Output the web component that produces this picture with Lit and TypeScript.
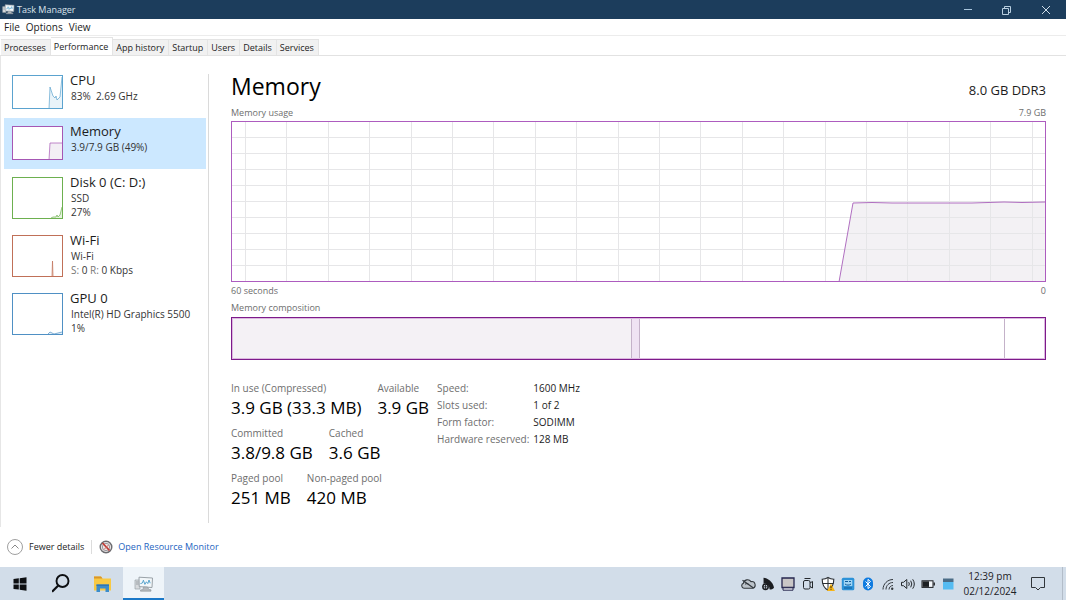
import { LitElement, html, css, svg } from "lit";
import { customElement, property, state } from "lit/decorators.js";
import { classMap } from "lit/directives/class-map.js";

interface Resource {
  id: string;
  name: string;
  lines: unknown[];
  color: string;
  fill: string;
  line: string;
  tall: boolean;
}

const resources: Resource[] = [
  {
    id: "cpu",
    name: "CPU",
    lines: ["83%  2.69 GHz"],
    color: "#5ba3cf",
    fill: "#e9f3f9",
    line: "M37 34 L38 12 L40 18 L41 21 L43 23 L44 21 L45 25 L47 23 L48 22 L50 2",
    tall: false,
  },
  {
    id: "memory",
    name: "Memory",
    lines: ["3.9/7.9 GB (49%)"],
    color: "#a657b4",
    fill: "#f3eff5",
    line: "M37 34 L38 17 L50 17",
    tall: false,
  },
  {
    id: "disk",
    name: "Disk 0 (C: D:)",
    lines: ["SSD", "27%"],
    color: "#6db04f",
    fill: "#e5f3df",
    line: "M39 41 L41 40 L44 40 L45 38 L46 40 L48 38 L49 34 L50 30",
    tall: true,
  },
  {
    id: "wifi",
    name: "Wi-Fi",
    lines: [
      "Wi-Fi",
      html`<span class="dim">S:</span> 0 <span class="dim">R:</span> 0 Kbps`,
    ],
    color: "#c07058",
    fill: "#f7dfd2",
    line: "M40 41 L40.500 26 L41 41",
    tall: true,
  },
  {
    id: "gpu",
    name: "GPU 0",
    lines: ["Intel(R) HD Graphics 5500", "1%"],
    color: "#4f90c4",
    fill: "#e4eff8",
    line: "M36 41 L38 39 L40 40 L42 41 L46 40 L50 39",
    tall: true,
  },
];

@customElement("usage-thumb")
class UsageThumb extends LitElement {
  @property({ attribute: false }) resource!: Resource;

  static styles = css`
    :host {
      display: block;
      flex: none;
      width: 51px;
    }
    svg {
      display: block;
      width: 100%;
    }
  `;

  render() {
    const r = this.resource;
    const h = r.tall ? 42 : 34;
    return html`<svg viewBox="0 0 51 ${h}" aria-hidden="true">
      <rect x=".5" y=".5" width="50" height=${h - 1} fill="#fff" />
      <path d="${r.line} V${h - 1} H37 Z" fill=${r.fill} />
      <path d=${r.line} fill="none" stroke=${r.color} stroke-width=".7" />
      <rect x=".5" y=".5" width="50" height=${h - 1} fill="none" stroke=${r.color} />
    </svg>`;
  }
}

@customElement("memory-chart")
class MemoryChart extends LitElement {
  static styles = css`
    :host {
      display: block;
      box-sizing: border-box;
      height: 161px;
      border: 1px solid #ad5cbf;
    }
    svg {
      display: block;
      width: 100%;
      height: 100%;
    }
    .grid {
      stroke: #e6e6e8;
      fill: none;
    }
    .area {
      fill: #f3f1f4;
    }
    .line {
      stroke: #b06fc0;
      fill: none;
    }
  `;

  render() {
    const columns = Array.from({ length: 20 }, (_, i) => Math.round(13 + i * 41.4) + 0.5);
    const rows = Array.from({ length: 9 }, (_, i) => Math.round((i + 1) * 16 - 1) + 0.5);
    const line = "607,160 621,81 640,80.5 660,81 740,81 772,80 790,80.5 813,80";
    return html`<svg viewBox="0 0 813 159" preserveAspectRatio="none" role="img" aria-label="Memory usage">
      <polygon class="area" points="${line} 813,159" />
      <g class="grid">
        ${columns.map((x) => svg`<path vector-effect="non-scaling-stroke" d="M${x} 0V159" />`)}
        ${rows.map((y) => svg`<path vector-effect="non-scaling-stroke" d="M0 ${y}H813" />`)}
      </g>
      <polyline class="line" points=${line} vector-effect="non-scaling-stroke" />
    </svg>`;
  }
}

const monitorIcon = html`<svg viewBox="0 0 20 16" aria-hidden="true">
  <path d="M1 4h5v9H1z" fill="#d7dadd" stroke="#9aa1a7" stroke-width=".7" />
  <path d="M5 1.2 18.5 2 18 11.5 5.2 10.6z" fill="#f2f7fa" stroke="#9aa2a8" stroke-width="1" />
  <path d="M6.4 7.6 8.4 7l1-2.800 1.500 4.200 1.500-2.600 1.400 1.800 1.200-3.600 1.200 3.200" fill="none" stroke="#4a9cc8" stroke-width=".9" />
  <path d="M9.5 11h4l1.500 2.600 2 .2v1.400H6.500v-1.300l2.400-.3z" fill="#b3b8bc" stroke="#8b9298" stroke-width=".6" />
  <path d="M2 6h2.600M2 8h2.600" stroke="#7d858b" stroke-width=".7" />
</svg>`;

const trayIcons: { label: string; icon: unknown }[] = [
  {
    label: "OneDrive",
    icon: svg`<path d="M4 12.300a2.600 2.600 0 0 1-.6-5A4.200 4.200 0 0 1 11 5.600a3.300 3.300 0 0 1 1.400 6.700z" fill="#bcc3ca" stroke="#33383d" stroke-width="1.100"/><path d="M2.500 4.200 13.500 12" stroke="#33383d" stroke-width="1.200"/><path d="M5 8.200c1.500-1 3-.6 4.200.6" fill="none" stroke="#33383d"/>`,
  },
  {
    label: "Graphics settings",
    icon: svg`<path d="M3.500 1.800c4 .2 9.500 4 10.500 9.800-.5 1.600-2.500 2.200-4.500 1.600C9.500 9.500 7 7.500 3.600 7.600z" fill="#1b1d20"/><circle cx="5.500" cy="10.800" r="2.700" fill="#d2dce8" stroke="#1b1d20" stroke-width="1.500"/><path d="M5.500 8.500v4.600M3.200 10.800h4.600" stroke="#1b1d20" stroke-width=".8"/>`,
  },
  {
    label: "Display",
    icon: svg`<path d="M2 2h12v9.500H2z" fill="#c9c6c6" stroke="#26264e" stroke-width="1.300"/><path d="M3 11.800h10v2.400H3z" fill="#eceef4" stroke="#26264e" stroke-width="1"/>`,
  },
  {
    label: "Meet now",
    icon: svg`<rect x="3.500" y="4.500" width="6.500" height="8.500" rx="1.500" fill="none" stroke="#24282c"/><path d="M10 7 12.500 5.500v6.500L10 10.500M4.500 2.500h6" fill="none" stroke="#24282c"/>`,
  },
  {
    label: "Windows Security",
    icon: svg`<path d="M8 1.500c1.800 1.200 3.600 1.700 5.800 1.800 0 5.500-1.500 8.700-5.800 11-4.300-2.300-5.800-5.500-5.800-11C4.400 3.200 6.200 2.700 8 1.500z" fill="#fff" stroke="#2b2f33" stroke-width="1.100"/><path d="M8 2v12M2.500 7.500h11" stroke="#2b2f33"/><path d="M11 7.500 15 15H7z" fill="#f7b519"/><path d="M11 10v2.300M11 13.200v.8" stroke="#3a2a00"/>`,
  },
  {
    label: "Intel Graphics",
    icon: svg`<rect x="1.800" y="1.800" width="12.500" height="12.500" rx="1.500" fill="#2c92d8"/><rect x="3.800" y="4" width="8.500" height="6" fill="#9fd4f4"/><path d="M5 5.500h3M9 5.500h2M5 8c2 1.500 4 1.500 6 0M4 12h8" fill="none" stroke="#0e5c9c"/>`,
  },
  {
    label: "Bluetooth",
    icon: svg`<rect x="3" y="1.500" width="10" height="13" rx="5" fill="#0f7be0"/><path d="M5.500 5.500l5 5L8 12.600V3.400l2.500 2.100-5 5" fill="none" stroke="#fff"/>`,
  },
  {
    label: "Wi-Fi",
    icon: svg`<path d="M3 13.500C3 8 7.500 3.500 13 3.500M6 13.500c0-4 3-7 7-7M9 13.500c0-2.200 1.800-4 4-4" fill="none" stroke="#34393e" stroke-width="1"/><circle cx="12.200" cy="12.700" r="1.200" fill="#34393e"/>`,
  },
  {
    label: "Volume",
    icon: svg`<path d="M1.500 6.300h2L6.800 3.500v9L3.500 9.700h-2z" fill="none" stroke="#24282c"/><path d="M8.700 6.200q1.200 1.800 0 3.600M10.700 4.700q2.200 3.300 0 6.600M12.700 3.300q3.200 4.700 0 9.400" fill="none" stroke="#24282c"/>`,
  },
  {
    label: "Battery",
    icon: svg`<rect x="2" y="4.800" width="11" height="6.600" fill="#f3f6fa" stroke="#1c1f22"/><path d="M2.500 5.300h6.500v5.600H2.500z" fill="#1c1f22"/><path d="M14.200 6.500v3" stroke="#1c1f22" stroke-width="1.400"/>`,
  },
  {
    label: "Desktop tool",
    icon: svg`<path d="M3 2.500h10.500V6H3z" fill="#4b6c86"/><path d="M3 6h10.500v7.500H3z" fill="#56bcf2"/>`,
  },
];

@customElement("windows-taskbar")
class WindowsTaskbar extends LitElement {
  static styles = css`
    :host {
      display: flex;
      flex: none;
      height: 33px;
      background: #d2dde9;
      color: #1d2126;
    }
    button {
      display: flex;
      align-items: center;
      justify-content: center;
      margin: 0;
      padding: 0;
      border: 0;
      background: none;
      font: inherit;
      color: inherit;
    }
    svg {
      display: block;
    }
    .app {
      width: 41px;
      box-sizing: border-box;
    }
    .running {
      background: #eef4f9;
      border-top: 2px solid #eef4f9;
      border-bottom: 2px solid #1a78c8;
    }
    .glyph {
      width: 20px;
      height: 20px;
    }
    .running svg {
      width: 20px;
      height: 16px;
    }
    .tray {
      display: flex;
      align-items: center;
      gap: 4px;
      margin-left: auto;
    }
    .tray svg {
      width: 16px;
      height: 16px;
    }
    .clock {
      flex-direction: column;
      width: 68px;
      font-size: 10px;
      line-height: 15px;
    }
    .notice {
      width: 28px;
    }
    .desktop {
      width: 4px;
      margin-left: 10px;
      border-left: 1px solid #b3bdc9;
    }
  `;

  render() {
    return html`
      <button class="app" aria-label="Start">
        <svg class="glyph" viewBox="0 0 20 20">
          <path d="M2.500 5 7.800 4.300v5.200H2.500zM8.700 4.200 15.500 3.200v6.300H8.700zM2.500 10.400h5.300v5.200L2.500 14.900zM8.700 10.400h6.800v6.300L8.700 15.700z" fill="#0d0f12" />
        </svg>
      </button>
      <button class="app" aria-label="Search">
        <svg class="glyph" viewBox="0 0 20 20">
          <circle cx="10.500" cy="7" r="6" fill="none" stroke="#0d0f12" stroke-width="1.900" />
          <path d="M6.300 11.500 0 17.800" stroke="#0d0f12" stroke-width="2.200" />
        </svg>
      </button>
      <button class="app" aria-label="File Explorer">
        <svg class="glyph" viewBox="0 0 20 20">
          <path d="M1 2.500h7l1.500 2H18v12H1z" fill="#f8c944" />
          <path d="M1 2.500h7l1.500 2H1z" fill="#d9962a" />
          <path d="M3.500 10.500h12.500V18h-3.500v-3.500H7V18H3.500z" fill="#3b8ccb" />
          <path d="M3.500 10.500h12.500v1.500H3.500z" fill="#2f77b4" />
        </svg>
      </button>
      <button class="app running" aria-label="Task Manager">${monitorIcon}</button>
      <div class="tray">
        ${trayIcons.map(
          (t) => html`<button aria-label=${t.label}><svg viewBox="0 0 16 16">${t.icon}</svg></button>`
        )}
      </div>
      <button class="clock"><span>12:39 pm</span><span>02/12/2024</span></button>
      <button class="notice" aria-label="Notifications">
        <svg width="16" height="16" viewBox="0 0 16 16">
          <path d="M1.500 1.500h13v10H10.500L8 14 5.500 11.500h-4z" fill="none" stroke="#30353a" />
        </svg>
      </button>
      <button class="desktop" aria-label="Show desktop"></button>
    `;
  }
}

@customElement("app-root")
class AppRoot extends LitElement {
  @state() private tab = "Performance";
  @state() private selected = "memory";

  static styles = css`
    :host {
      display: flex;
      flex-direction: column;
      min-height: 100vh;
      background: #fff;
      color: #1c1c1c;
      font-family: "Open Sans", "Noto Sans", sans-serif;
      font-size: 10px;
      line-height: 14px;
    }
    button {
      margin: 0;
      padding: 0;
      border: 0;
      background: none;
      color: inherit;
      font: inherit;
      text-align: left;
    }
    svg {
      display: block;
    }
    h1,
    dl,
    dd {
      margin: 0;
      font-weight: 400;
    }
    .titlebar {
      display: flex;
      align-items: center;
      height: 19px;
      padding: 0 1px 0 2px;
      background: #1c3d5c;
      color: #dbe4ec;
      font-size: 9px;
    }
    .titlebar .logo {
      width: 13px;
      margin-right: 2px;
    }
    .controls {
      display: flex;
      margin-left: auto;
    }
    .controls button {
      display: flex;
      justify-content: center;
      width: 39px;
    }
    .menu {
      display: flex;
      gap: 6px;
      height: 16px;
      align-items: center;
      padding-left: 4px;
      border-bottom: 1px solid #ececec;
    }
    .tabs {
      display: flex;
      align-items: flex-end;
      height: 19px;
      padding-left: 1px;
      border-bottom: 1px solid #e2e2e2;
      font-size: 9px;
    }
    .tab {
      height: 16px;
      padding: 0 4px 0 3px;
      background: #f1f1f1;
      border: solid #e4e4e4;
      border-width: 1px 1px 0 0;
      line-height: 15px;
    }
    .tab.active {
      height: 18px;
      background: #fff;
      line-height: 16px;
    }
    .body {
      display: flex;
      flex: 1;
      border-left: 1px solid #e6e6e6;
    }
    .side {
      flex: none;
      box-sizing: border-box;
      width: 208px;
      padding: 0 2px 0 3px;
      margin: 18px 0 4px;
      border-right: 1px solid #dadada;
    }
    .list {
      display: flex;
      flex-direction: column;
      margin-top: -7px;
    }
    .item {
      display: flex;
      align-items: flex-start;
      gap: 7px;
      padding: 8px;
      height: 51px;
      box-sizing: border-box;
    }
    .item.tall {
      height: 58px;
    }
    .item.on {
      background: #cce8ff;
    }
    .info {
      display: flex;
      flex-direction: column;
      white-space: pre;
      margin-top: -3px;
    }
    .name {
      font-size: 13px;
      line-height: 17px;
    }
    .sub {
      padding-left: 1px;
      color: #333;
    }
    .dim {
      color: #777;
    }
    .main {
      flex: 1;
      min-width: 0;
      padding: 13px 20px 0 22px;
    }
    .row {
      display: flex;
      justify-content: space-between;
      color: #6e6e6e;
      font-size: 9px;
      line-height: 17px;
    }
    .head {
      display: flex;
      justify-content: space-between;
      align-items: baseline;
      height: 35px;
    }
    h1 {
      font-size: 23px;
      line-height: 34px;
      color: #000;
    }
    .size {
      font-size: 13px;
    }
    .composition {
      display: flex;
      box-sizing: border-box;
      height: 43px;
      margin-top: 1px;
      border: 1px solid #7d1a8a;
      outline: 1px solid #dcb8e0;
      outline-offset: -2px;
    }
    .part {
      box-sizing: border-box;
      border-right: 1px solid #c4b2c9;
    }
    .used {
      background: #f4f1f5;
    }
    .modified {
      background: #efe3f3;
    }
    .free {
      flex: 1;
      border: 0;
    }
    .details {
      display: flex;
      gap: 8px;
      margin-top: 20px;
    }
    .stats {
      display: flex;
      flex-direction: column;
      gap: 5px;
    }
    .pair {
      display: flex;
      gap: 16px;
    }
    dt {
      color: #6e6e6e;
      line-height: 16px;
      white-space: nowrap;
    }
    .pair dd {
      font-size: 17px;
      line-height: 24px;
      color: #000;
    }
    .spec {
      display: grid;
      grid-template-columns: auto auto;
      column-gap: 4px;
      grid-auto-rows: 17px;
      align-self: flex-start;
    }
    .spec dd {
      line-height: 16px;
    }
    .footer {
      display: flex;
      align-items: center;
      height: 40px;
      padding-left: 6px;
      font-size: 9px;
    }
    .fewer {
      display: flex;
      align-items: center;
      gap: 5px;
      padding-right: 7px;
    }
    .link {
      display: flex;
      align-items: center;
      gap: 5px;
      padding-left: 7px;
      border-left: 1px solid #dcdcdc;
      color: #2464c0;
      text-decoration: none;
    }
  `;

  private stat(label: string, value: string) {
    return html`<div><dt>${label}</dt><dd>${value}</dd></div>`;
  }

  render() {
    const tabs = ["Processes", "Performance", "App history", "Startup", "Users", "Details", "Services"];
    const parts = [
      { kind: "used", share: 49.2 },
      { kind: "modified", share: 1 },
      { kind: "standby", share: 44.9 },
    ];
    const spec = [
      ["Speed:", "1600 MHz"],
      ["Slots used:", "1 of 2"],
      ["Form factor:", "SODIMM"],
      ["Hardware reserved:", "128 MB"],
    ];
    return html`
      <header class="titlebar">
        <div class="logo">${monitorIcon}</div>
        <span>Task Manager</span>
        <div class="controls">
          <button aria-label="Minimize"><svg width="10" height="10" viewBox="0 0 10 10"><path d="M1 4.500h8" stroke="#a9c6dd" /></svg></button>
          <button aria-label="Restore"><svg width="10" height="10" viewBox="0 0 10 10"><path d="M.5 3.500h6v6h-6zM2.500 3.500v-2h6v6h-2" fill="none" stroke="#b9cfe0" /></svg></button>
          <button aria-label="Close"><svg width="10" height="10" viewBox="0 0 10 10"><path d="M1 1l8 8M9 1l-8 8" stroke="#cfdde8" /></svg></button>
        </div>
      </header>
      <nav class="menu"><button>File</button><button>Options</button><button>View</button></nav>
      <div class="tabs" role="tablist">
        ${tabs.map(
          (t) => html`<button
            role="tab"
            aria-selected=${t === this.tab ? "true" : "false"}
            class=${classMap({ tab: true, active: t === this.tab })}
            @click=${() => (this.tab = t)}
          >${t}</button>`
        )}
      </div>
      <div class="body">
        <aside class="side">
          <div class="list">
            ${resources.map(
              (r) => html`<button
                class=${classMap({ item: true, tall: r.tall, on: r.id === this.selected })}
                @click=${() => (this.selected = r.id)}
              >
                <usage-thumb .resource=${r}></usage-thumb>
                <span class="info"><span class="name">${r.name}</span>${r.lines.map((l) => html`<span class="sub">${l}</span>`)}</span>
              </button>`
            )}
          </div>
        </aside>
        <main class="main">
          <div class="head"><h1>Memory</h1><span class="size">8.0 GB DDR3</span></div>
          <div class="row"><span>Memory usage</span><span>7.9 GB</span></div>
          <memory-chart></memory-chart>
          <div class="row"><span>60 seconds</span><span>0</span></div>
          <div class="row"><span>Memory composition</span></div>
          <div class="composition">
            ${parts.map((p) => html`<div class="part ${p.kind}" style="width:${p.share}%"></div>`)}
            <div class="part free"></div>
          </div>
          <div class="details">
            <div class="stats">
              <dl class="pair">${this.stat("In use (Compressed)", "3.9 GB (33.3 MB)")}${this.stat("Available", "3.9 GB")}</dl>
              <dl class="pair">${this.stat("Committed", "3.8/9.8 GB")}${this.stat("Cached", "3.6 GB")}</dl>
              <dl class="pair">${this.stat("Paged pool", "251 MB")}${this.stat("Non-paged pool", "420 MB")}</dl>
            </div>
            <dl class="spec">${spec.map(([k, v]) => html`<dt>${k}</dt><dd>${v}</dd>`)}</dl>
          </div>
        </main>
      </div>
      <footer class="footer">
        <button class="fewer">
          <svg width="18" height="18" viewBox="0 0 18 18"><circle cx="9" cy="9" r="7.500" fill="#fff" stroke="#a0a0a0" /><path d="M5.500 10.500 9 7l3.500 3.500" fill="none" stroke="#888" /></svg>
          <span>Fewer details</span>
        </button>
        <a class="link" href="#resource-monitor">
          <svg width="14" height="14" viewBox="0 0 14 14"><circle cx="7" cy="7" r="5.800" fill="#ece6e6" stroke="#6c6c70" stroke-width="1.400" /><circle cx="7" cy="7" r="3.700" fill="none" stroke="#9a9aa0" /><path d="M3.500 3 10.500 10.500" stroke="#c03a34" stroke-width="1.800" /><path d="M5 9.500 9.500 5" stroke="#c86a64" stroke-width="1" /></svg>
          <span>Open Resource Monitor</span>
        </a>
      </footer>
      <windows-taskbar></windows-taskbar>
    `;
  }
}
